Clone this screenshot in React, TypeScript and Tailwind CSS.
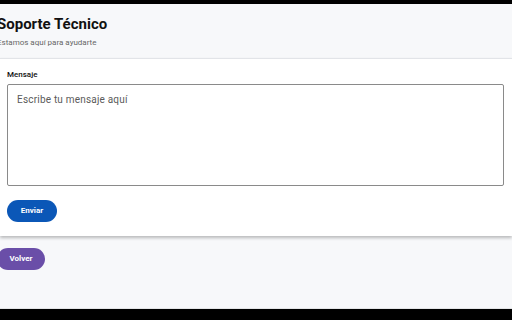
export default function App() {
  return (
    <div className="h-[320px] w-[512px] bg-black pt-[4px] pb-[11px] overflow-hidden" style={{ fontFamily: "Roboto, 'Noto Sans', sans-serif" }}>
      <main className="h-full bg-[#f7f8fa] border-b border-[#e3e4e6] flex flex-col overflow-hidden">
        <header className="-ml-[3px] pt-[11px] pb-[10px]">
          <h1 className="text-[15px] leading-[18px] font-bold text-[#111]">Soporte Técnico</h1>
          <p className="mt-[5px] text-[8px] leading-[10px] text-[#666]">Estamos aquí para ayudarte</p>
        </header>

        <section className="bg-white border-t border-[#e2e4e8] shadow-[0_2px_3px_rgba(0,0,0,0.25)] px-[7px] pt-[11px] pb-[14px]">
          <label className="block text-[8px] leading-[10px] font-medium text-[#111]">Mensaje</label>
          <textarea
            className="mt-[4px] block w-[497px] h-[102px] resize-none border border-[#8a8a8a] rounded-[2px] px-[9px] py-[9px] text-[10px] leading-[12px] tracking-[0.2px] text-[#333] placeholder:text-[#5a5a5a] outline-none"
            placeholder="Escribe tu mensaje aquí"
          />
          <button className="mt-[14px] block w-[50px] h-[22px] rounded-full bg-[#0b57b7] text-white text-[8px] font-bold">
            Enviar
          </button>
        </section>

        <div className="-ml-[3px] pt-[12px]">
          <button className="block w-[48px] h-[22px] rounded-full bg-[#6a4ea8] text-white text-[8px] font-bold">
            Volver
          </button>
        </div>
      </main>
    </div>
  );
}
